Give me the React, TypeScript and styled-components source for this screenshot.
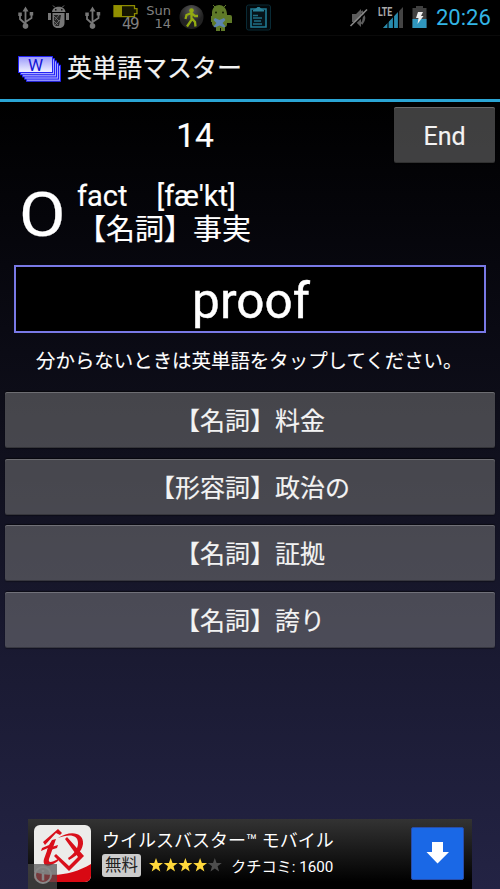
import React from "react";
import styled, { createGlobalStyle } from "styled-components";

const GlobalStyle = createGlobalStyle`
  * { box-sizing: border-box; }
  body { margin: 0; background: #000; overflow: hidden; }
`;

const Screen = styled.div`
  width: 500px;
  height: 889px;
  display: flex;
  flex-direction: column;
  overflow: hidden;
  color: #fff;
  background: linear-gradient(#000 0, #000 102px, #07070e 265px, #11111f 480px, #1a1a32 660px, #232344 889px);
  font-family: Roboto, "Noto Sans CJK JP", sans-serif;
  white-space: nowrap;
`;

const StatusBar = styled.header`
  display: flex;
  align-items: center;
  height: 36px;
  flex: none;
  background: #000;
  border-bottom: 1px solid #0a0a0a;
`;

const StatusIcons = styled.svg`
  display: block;
  flex: none;
`;

const DateStack = styled.div`
  display: flex;
  flex-direction: column;
  align-items: flex-end;
  width: 27px;
  margin-left: 6px;
  color: #808080;
  font: 13px/13px "DejaVu Sans", sans-serif;
  padding-bottom: 1px;
`;

const Battery = styled.div`
  display: flex;
  flex-direction: column;
  align-items: flex-end;
  width: 25px;
  color: #808080;
  font: 15px/12px "DejaVu Sans", sans-serif;
  letter-spacing: -1.5px;
  padding-bottom: 1px;
`;

const Spacer = styled.div`
  flex: 1;
`;

const Network = styled.div`
  width: 27px;
  height: 22px;
  position: relative;
`;

const NetworkLabel = styled.span`
  position: absolute;
  left: 0;
  top: -1px;
  color: #aaa;
  font: bold 12px/12px Roboto, sans-serif;
  transform: scaleX(0.74);
  transform-origin: left;
`;

const Clock = styled.time`
  width: 57px;
  margin: 0 7px 0 8px;
  color: #33b5e5;
  font-size: 22px;
  line-height: 36px;
`;

const TitleBar = styled.div`
  display: flex;
  align-items: center;
  flex: none;
  height: 66px;
  padding: 0 0 2px 18px;
  gap: 6px;
  background: #000;
  border-bottom: 3px solid #2aa5d4;
`;

const Title = styled.h1`
  margin: 0;
  padding-top: 4px;
  font-size: 25px;
  line-height: 36px;
  font-weight: 400;
  color: #f3f3f3;
  -webkit-text-stroke: 0.2px;
`;

const ScoreRow = styled.div`
  display: flex;
  flex: none;
  height: 66px;
  padding: 5px 5px 0 0;
`;

const Count = styled.div`
  flex: 1;
  height: 57px;
  padding-right: 4px;
  text-align: center;
  font-size: 33.5px;
  line-height: 57px;
  -webkit-text-stroke: 0.2px;
`;

const PanelButton = styled.button<{ $width?: string; $drop?: number }>`
  width: ${(p) => p.$width ?? "100%"};
  height: 56px;
  flex: none;
  padding: ${(p) => p.$drop ?? 4}px 0 0;
  border: 0;
  border-radius: 2px;
  color: #f3f3f3;
  background: rgba(128, 128, 128, 0.49);
  box-shadow: inset 0 1px 0 rgba(255, 255, 255, 0.22), inset 0 -1px 0 rgba(0, 0, 0, 0.25),
    0 -1px 1px rgba(0, 0, 0, 0.5), 0 1px 1px rgba(0, 0, 0, 0.3);
  font-family: inherit;
  font-size: 25px;
  line-height: 52px;
  -webkit-text-stroke: 0.15px;
`;

const PreviousRow = styled.div`
  display: flex;
  flex: none;
  height: 97px;
  padding: 11px 0 0 19px;
  -webkit-text-stroke: 0.2px;
`;

const Verdict = styled.div`
  width: 58px;
  font-size: 61.5px;
  line-height: 73px;
  transform: scaleX(1.1);
  transform-origin: left;
`;

const PreviousWord = styled.div`
  font-size: 29px;
  line-height: 35px;
`;

const Word = styled.div`
  height: 34px;
  line-height: 34px;
`;

const WordBox = styled.div`
  flex: none;
  height: 68px;
  margin: 0 14px;
  padding-left: 2px;
  border: 2px solid #7979e6;
  background: #000;
  text-align: center;
  font-size: 49.5px;
  line-height: 69px;
  -webkit-text-stroke: 0.4px;
`;

const Hint = styled.p`
  flex: none;
  height: 59px;
  margin: 0;
  padding-left: 36px;
  font-size: 19.45px;
  line-height: 58px;
  -webkit-text-stroke: 0.1px;
`;

const Answers = styled.div`
  display: flex;
  flex-direction: column;
  gap: 10.7px;
  padding: 0 5px;
`;

const Ad = styled.aside`
  display: flex;
  flex: none;
  width: 444px;
  height: 70px;
  margin: auto 28px 0;
  padding: 6px 8px 0 6px;
  background: linear-gradient(#333, #000 90%);
  position: relative;
`;

const AdText = styled.div`
  flex: 1;
  padding-left: 10px;
`;

const AdTitle = styled.div`
  font-size: 18px;
  line-height: 31px;
  height: 28px;
`;

const AdMeta = styled.div`
  display: flex;
  align-items: center;
  height: 24px;
  font-size: 15.2px;
`;

const Price = styled.span`
  width: 39px;
  height: 23px;
  margin-right: 8px;
  border-radius: 3px;
  background: #ccc;
  color: #222;
  text-align: center;
  font-size: 16.5px;
  line-height: 23px;
`;

const Reviews = styled.span`
  margin-left: 9px;
`;

const Download = styled.button`
  width: 53px;
  height: 53px;
  margin-top: 2px;
  padding: 0;
  border: 1px solid #284ca8;
  border-radius: 2px;
  background: #1a68e6;
`;

const InfoBadge = styled.div`
  position: absolute;
  left: 0;
  bottom: 0;
  width: 29px;
  height: 25px;
  background: rgba(80, 80, 80, 0.7);
`;

const Usb = () => (
  <g stroke="#777" fill="none" strokeWidth="1.8">
    <path d="M7 4v18M1.5 8v4.5L7 17.5M13 8v3.5L7 15.5" />
    <path d="M7 0l-3 5h6z" fill="#777" stroke="none" />
    <circle cx="7" cy="19.5" r="2.8" fill="#777" stroke="none" />
    <path d="M-.2 6h3.5v3.5H-.2zM11.2 5.5h3.5V9h-3.5z" fill="#777" stroke="none" />
  </g>
);

const Star = ({ x, on }: { x: number; on: boolean }) => (
  <path
    transform={`translate(${x} 0)`}
    d="M7 0l1.8 5H14L9.8 8.3l1.5 5.2L7 10.4l-4.3 3.1 1.5-5.2L0 5h5.2z"
    fill={on ? "#ffd83b" : "#4d4d4d"}
  />
);

const answers = ["【名詞】料金", "【形容詞】政治の", "【名詞】証拠", "【名詞】誇り"];

export default function App() {
  return (
    <Screen>
      <GlobalStyle />
      <StatusBar>
        <StatusIcons width="113" height="36" viewBox="0 0 113 36">
          <g transform="translate(18.5 6.5)"><Usb /></g>
          <g transform="translate(85.5 6.5)"><Usb /></g>
          <g fill="#777">
            <path d="M52 12c.5-7 13-7 13.5 0zM52.5 13h12v10q0 4-4 5h-4q-4-1-4-5z" />
            <path d="M48 13h3v7h-3zM66 13h3v7h-3z" />
            <path d="M55 7.5l-2-2M62 7.5l2-2" stroke="#777" />
          </g>
          <path d="M54 15h7l-2 11h-3q-2-1-2-4z" fill="#252525" />
          <path d="M54 16l5 5M59 15l-4 5M54 21l4 4M60 20l-5 5" stroke="#777" strokeWidth=".8" />
          <path d="M55 9h1.5v1.5H55zM61 9h1.5v1.5H61z" fill="#111" />
        </StatusIcons>
        <Battery>
          <StatusIcons width="25" height="13" viewBox="0 0 25 13">
            <path d="M1 .7h20.500v3H24v5h-2.500v3H1z" fill="#151500" stroke="#8d8b00" strokeWidth="1.3" />
            <path d="M1 1h8v10.500H1z" fill="#929000" />
          </StatusIcons>
          49
        </Battery>
        <DateStack>
          <span>Sun</span>
          <span>14</span>
        </DateStack>
        <StatusIcons width="100" height="36" viewBox="0 0 100 36">
          <defs>
            <radialGradient id="walkBall" cy=".25">
              <stop stopColor="#5c5c5c" />
              <stop offset="1" stopColor="#222" />
            </radialGradient>
          </defs>
          <g transform="translate(-1 0)">
            <circle cx="21.5" cy="17" r="12" fill="url(#walkBall)" />
            <circle cx="21.5" cy="10.5" r="2.3" fill="#93ab12" />
            <path d="M21.5 12v8l-4.500 6.500M21.500 18l3.500 4 .5 4.500M21.500 13l-5 2-1 4M21.500 13l3.500 3h3" fill="none" stroke="#93ab12" strokeWidth="2.3" />
            <g fill="#5f7a28">
              <path d="M42 14c-.5-12 14.500-12 15 0v1H42zM42 15h15v9q0 3-2 3v4h-4v-3h-1v3h-4v-4q-3 0-4-3z" />
              <path d="M56 15h4q2 0 2 2v6h-6zM41 16h2v6h-2z" />
              <path d="M45 7l-2-2M54 7l2-2" stroke="#5f7a28" />
            </g>
            <circle cx="46" cy="12.5" r="1" fill="#172006" />
            <circle cx="53" cy="12.5" r="1" fill="#172006" />
            <path d="M45 18l4.500 2 4.500-2 1.500 2-3 3 3 3.500-1.500 1-4.500-2-4.500 2-1.500-1 3-3.500-3-3z" fill="#5c85af" />
            <rect x="76.5" y="5" width="24" height="25" rx="2" fill="#03090c" stroke="#092a35" />
            <g transform="translate(2 0)">
              <path d="M79 9h15v18H79z" fill="#061319" stroke="#207b94" strokeWidth="1.6" />
              <path d="M81 11.500h11V10l-3-1.500-1.500-1.500h-2L84 8.500 81 10z" fill="#2b8198" />
              <path d="M81 15.500h5M81 18h9M82 21h7M81 24h9" stroke="#216f84" strokeWidth="1.3" />
            </g>
          </g>
        </StatusIcons>
        <Spacer />
        <StatusIcons width="30" height="36" viewBox="0 0 30 36">
          <path d="M4 14h4l5-5v18l-5-5H4z" fill="#5c5c5c" />
          <path d="M13.5 11q5 7 0 13" fill="none" stroke="#5c5c5c" strokeWidth="2.5" />
          <path d="M3.500 27L20 11" stroke="#000" strokeWidth="1.5" />
          <path d="M2.500 26L19 9.500" stroke="#888" strokeWidth="1.6" />
        </StatusIcons>
        <Network>
          <StatusIcons width="27" height="22" viewBox="0 0 27 22">
            <path d="M5 21L25 0v21z" fill="#444" />
            <path d="M5 21L21 4v17z" fill="#278bad" />
            <path d="M10 13v8M15.500 8v13M20.500 3v18" stroke="#000" strokeWidth="1.2" />
          </StatusIcons>
          <NetworkLabel>LTE</NetworkLabel>
        </Network>
        <StatusIcons width="23" height="36" viewBox="0 0 23 36">
          <path d="M7.500 8h3.500V6h7v2h3.500v20h-14z" fill="#404040" />
          <path d="M7.500 19h14v9h-14z" fill="#2f96be" />
          <path d="M13 12h5l-2 4h2.500l-6 8 1-6H11z" fill="#eee" />
        </StatusIcons>
        <Clock>20:26</Clock>
      </StatusBar>

      <TitleBar>
        <StatusIcons width="43" height="32" viewBox="0 -5 43 32">
          <defs>
            <linearGradient id="cardFill" x2="0" y2="1">
              <stop stopColor="#9999fb" />
              <stop offset="1" stopColor="#f4f4ff" />
            </linearGradient>
          </defs>
          {[8, 6, 4, 2, 0].map((n) => (
            <rect
              key={n}
              x={n + 0.5}
              y={n * 1.1 + 0.5}
              width="34"
              height="16"
              fill={n ? "#a9a9ff" : "url(#cardFill)"}
              stroke="#2323f5"
            />
          ))}
          <text x="17.5" y="14.5" fill="#1414d6" fontFamily="Roboto" fontSize="17" textAnchor="middle">W</text>
        </StatusIcons>
        <Title>英単語マスター</Title>
      </TitleBar>

      <ScoreRow>
        <Count>14</Count>
        <PanelButton $width="101px" $drop={4}>End</PanelButton>
      </ScoreRow>
      <PreviousRow>
        <Verdict>O</Verdict>
        <PreviousWord>
          <Word>fact　[fæ'kt]</Word>
          <div>【名詞】事実</div>
        </PreviousWord>
      </PreviousRow>
      <WordBox>proof</WordBox>
      <Hint>分からないときは英単語をタップしてください。</Hint>
      <Answers>
        {answers.map((a) => (
          <PanelButton key={a}>{a}</PanelButton>
        ))}
      </Answers>

      <Ad>
        <StatusIcons width="58" height="58" viewBox="0 0 58 58">
          <defs>
            <clipPath id="logoClip"><rect width="57" height="57" rx="6" /></clipPath>
          </defs>
          <g clipPath="url(#logoClip)">
            <rect width="58" height="58" fill="#ececea" />
            <path d="M0 47C20 53 40 49 57 39V58H0z" fill="#d80913" />
            <g fill="#d9101b">
              <path d="M9 17L24 4l4 4-2 2-4-2L11 20z" />
              <path d="M24 13C36 5 50 7 49 19c-1 8-8 13-14 16l-1-2c6-4 10-9 10-15 0-9-10-9-20-5z" />
              <path d="M33 12l17 19-15 15L20 31l2-2 13 12 9-9-13-18z" />
              <path d="M18 15l4-1-7 20c-1 4 2 4 9 0v2c-9 7-16 6-14-2l4-11-7 3 1-3 7-3z" />
              <path d="M14 23l10-3-1 3-10 3z" />
            </g>
          </g>
        </StatusIcons>
        <AdText>
          <AdTitle>ウイルスバスター™ モバイル</AdTitle>
          <AdMeta>
            <Price>無料</Price>
            <StatusIcons width="73" height="14" viewBox="0 0 73 14">
              {[0, 1, 2, 3, 4].map((n) => <Star key={n} x={n * 14.7} on={n < 4} />)}
            </StatusIcons>
            <Reviews>クチコミ: 1600</Reviews>
          </AdMeta>
        </AdText>
        <Download aria-label="ダウンロード">
          <StatusIcons width="51" height="51" viewBox="0 0 51 51">
            <path d="M20 14h11v10h6L25.500 35.500 14.500 24H20z" fill="#fff" />
          </StatusIcons>
        </Download>
        <InfoBadge>
          <StatusIcons width="29" height="25" viewBox="0 0 29 25">
            <circle cx="15" cy="11" r="8" fill="none" stroke="#888" strokeWidth="2" />
            <path d="M15 6v2M15 9.500v7" stroke="#888" strokeWidth="2.5" />
          </StatusIcons>
        </InfoBadge>
      </Ad>
    </Screen>
  );
}
